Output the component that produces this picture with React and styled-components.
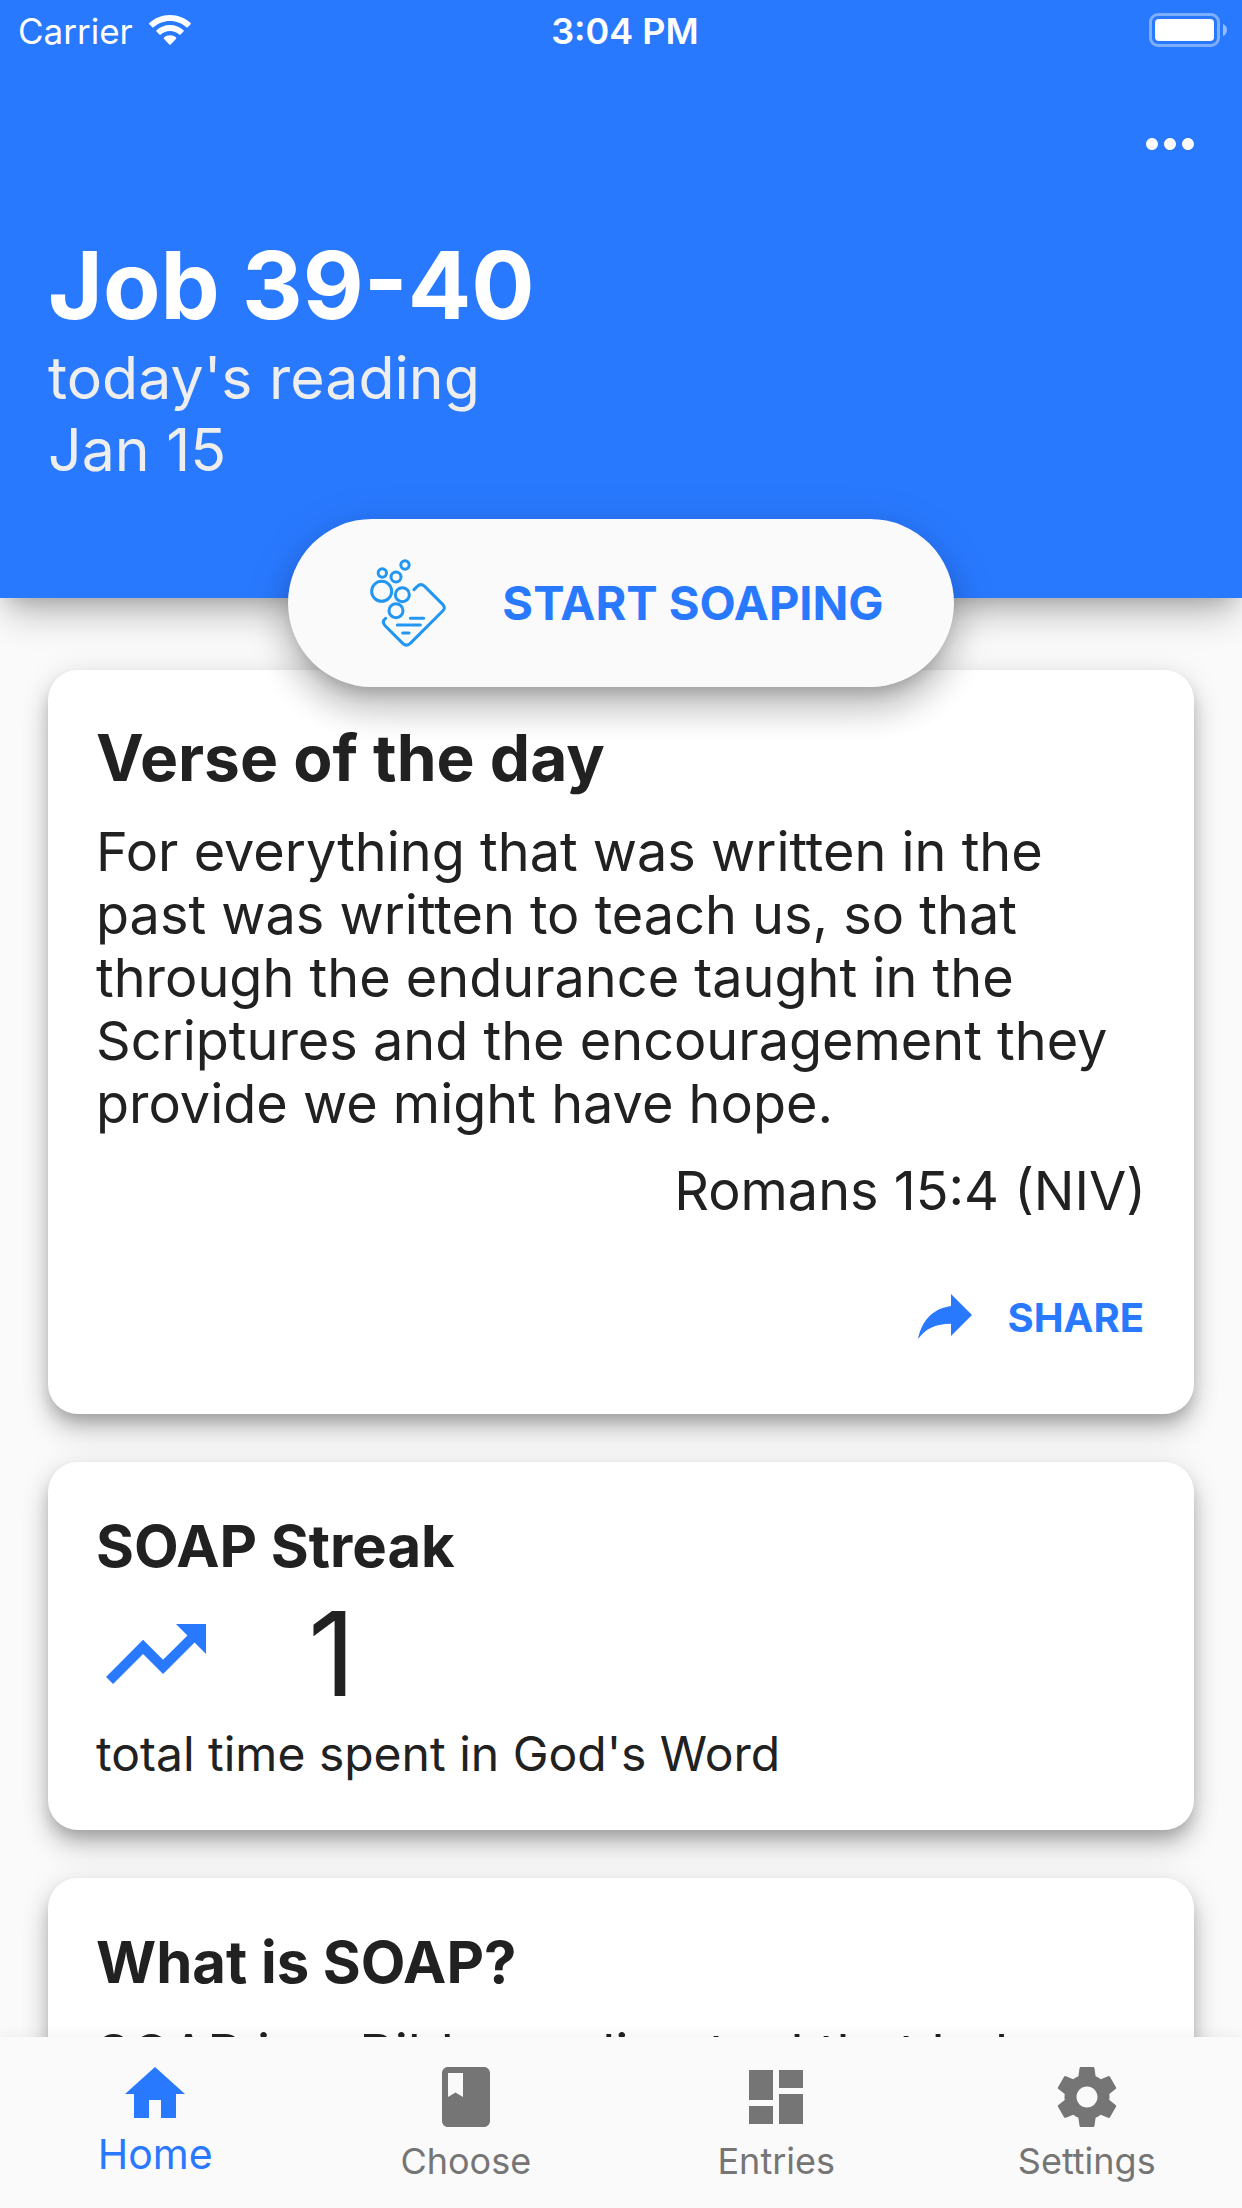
import React from "react";
import styled, { createGlobalStyle } from "styled-components";
import { MdMoreHoriz, MdTrendingUp, MdHome, MdBook, MdDashboard } from "react-icons/md";

const blue = "#2979ff";
const ink = "#212121";
const surface = "#fafafa";
const raised = "0 15px 15px -9px rgba(0, 0, 0, 0.2), 0 24px 30px 3px rgba(0, 0, 0, 0.14), 0 9px 42px 6px rgba(0, 0, 0, 0.12)";

const GlobalStyle = createGlobalStyle`
  *, *::before, *::after { box-sizing: border-box; }
  body { margin: 0; background: ${surface}; font-family: Inter, Roboto, "Liberation Sans", sans-serif; color: ${ink}; }
  h1, h2, p { margin: 0; }
  button { font: inherit; border: 0; cursor: pointer; }
  svg { display: block; flex: none; }
`;

const Screen = styled.div`
  display: flex;
  flex-direction: column;
  height: 100vh;
  overflow: hidden;
`;

const Scroller = styled.div`
  flex: 1;
  min-height: 0;
  overflow: hidden;
`;

const Header = styled.header`
  background: ${blue};
  color: #fff;
  padding-bottom: 112px;
  box-shadow: 0 12px 18px -9px rgba(0, 0, 0, 0.16), 0 24px 36px -9px rgba(0, 0, 0, 0.2), 0 9px 42px 0 rgba(0, 0, 0, 0.08);
`;

const StatusBar = styled.div`
  display: grid;
  grid-template-columns: 1fr auto 1fr;
  align-items: center;
  height: 60px;
  padding: 0 14px 0 18px;
  font-size: 35px;
  line-height: 40px;
`;

const StatusSide = styled.div`
  display: flex;
  align-items: center;
  justify-content: ${(p) => (p.$end ? "flex-end" : "flex-start")};
  gap: 16px;
`;

const StatusText = styled.span`
  padding-top: 2px;
  padding-left: ${(p) => (p.$strong ? 4 : 0)}px;
  font-size: ${(p) => (p.$strong ? 36 : 35)}px;
  font-weight: ${(p) => (p.$strong ? 600 : 400)};
`;

const Toolbar = styled.div`
  display: flex;
  justify-content: flex-end;
  padding: 48px 36px;
`;

const IconButton = styled.button`
  padding: 0;
  background: none;
  color: ${surface};
`;

const Reading = styled.div`
  padding: 0 48px;
`;

const ReadingTitle = styled.h1`
  font-size: 94px;
  line-height: 114px;
  font-weight: 700;
`;

const ReadingMeta = styled.p`
  font-size: 59px;
  line-height: 72px;
  color: #eeeeee;
`;

const ActionRow = styled.div`
  display: flex;
  justify-content: center;
  position: relative;
  z-index: 1;
  margin-top: -79px;
`;

const PillButton = styled.button`
  display: flex;
  align-items: center;
  gap: 48px;
  height: 168px;
  padding: 0 70px 0 76px;
  border-radius: 84px;
  background: ${surface};
  color: ${blue};
  font-size: 47px;
  line-height: 56px;
  font-weight: 700;
  box-shadow: ${raised};
`;

const Cards = styled.main`
  display: flex;
  flex-direction: column;
  gap: 48px;
  margin-top: -17px;
  padding: 0 48px 48px;
`;

const Card = styled.section`
  padding: 48px;
  border-radius: 30px;
  background: #fff;
  box-shadow: 0 9px 15px -3px rgba(0, 0, 0, 0.2), 0 18px 27px 0 rgba(0, 0, 0, 0.16), 0 3px 30px 0 rgba(0, 0, 0, 0.1);
`;

const CardTitle = styled.h2`
  font-size: ${(p) => (p.$large ? 64 : 58)}px;
  line-height: ${(p) => (p.$large ? 80 : 72)}px;
  font-weight: 700;
`;

const Passage = styled.p`
  margin-top: 24px;
  font-size: 54px;
  line-height: 63px;

  ${CardTitle} + & {
    margin-top: ${(p) => (p.$tight ? 22 : 24)}px;
  }
`;

const Citation = styled(Passage)`
  text-align: right;
`;

const CardActions = styled.div`
  display: flex;
  justify-content: flex-end;
  margin-top: 48px;
`;

const TextButton = styled.button`
  display: flex;
  align-items: center;
  gap: 26px;
  height: 96px;
  padding: 0 2px;
  background: none;
  color: ${blue};
  font-size: 40px;
  line-height: 48px;
  font-weight: 700;
`;

const Streak = styled.div`
  display: flex;
  align-items: center;
  gap: 92px;
  height: 120px;
  margin-top: 12px;
  color: ${blue};
`;

const StreakCount = styled.span`
  color: ${ink};
  font-size: 117px;
  line-height: 120px;
`;

const Caption = styled.p`
  margin-top: 12px;
  font-size: 48px;
  line-height: 56px;
`;

const TabBar = styled.nav`
  display: grid;
  grid-template-columns: repeat(4, 1fr);
  height: 171px;
  background: ${surface};
  position: relative;
  z-index: 2;
  box-shadow: 0 -3px 12px rgba(0, 0, 0, 0.05);
`;

const Tab = styled.a`
  display: flex;
  flex-direction: column;
  align-items: center;
  padding-top: ${(p) => (p.$active ? 21 : 24)}px;
  color: ${(p) => (p.$active ? blue : "#757575")};
  font-size: ${(p) => (p.$active ? 41 : 36)}px;
  line-height: 48px;
  gap: ${(p) => (p.$active ? 0 : 4)}px;
  text-decoration: none;
`;

const WifiIcon = () => (
  <svg width="42" height="30" viewBox="0 0 42 30" fill="#fff" aria-hidden="true">
    <path d="M21 0C29 0 36.300 3 41.600 8.100a.8.8 0 0 1 0 1.200L38.700 12.300a.9.9 0 0 1-1.200 0C33.200 8.200 27.300 5.900 21 5.900S8.800 8.200 4.500 12.300a.9.9 0 0 1-1.200 0L.4 9.300a.8.8 0 0 1 0-1.200C5.700 3 13 0 21 0Z" />
    <path d="M21 10c5.200 0 9.900 2 13.500 5.200.4.400.4.900 0 1.300l-3 3.100c-.4.400-.9.400-1.300 0C27.700 17.300 24.500 16 21 16s-6.700 1.300-9.200 3.600c-.4.400-.9.400-1.300 0l-3-3.100c-.4-.4-.4-.9 0-1.300C11.100 12 15.800 10 21 10Z" />
    <path d="M21 20.300c2.300 0 4.400.8 6 2.200.4.400.4.900.1 1.300L21.700 29.500c-.4.400-1 .4-1.400 0L14.900 23.800c-.3-.4-.3-.9.100-1.300 1.600-1.400 3.700-2.200 6-2.200Z" />
  </svg>
);

const BatteryIcon = () => (
  <svg width="79" height="34" viewBox="0 0 79 34" aria-hidden="true">
    <rect x="1.500" y="1.500" width="68" height="31" rx="7.500" fill="none" stroke="#fff" strokeOpacity="0.4" strokeWidth="3" />
    <rect x="6" y="6" width="59" height="22" rx="4" fill="#fff" />
    <path d="M74 11c2.700 1 4 3.400 4 6s-1.300 5-4 6Z" fill="#fff" fillOpacity="0.5" />
  </svg>
);

const SoapIcon = () => (
  <svg width="90" height="90" viewBox="72 84 270 270" fill="none" stroke="#2196f3" strokeWidth="9" strokeLinecap="round" strokeLinejoin="round" aria-hidden="true">
    <circle cx="125" cy="184" r="30" />
    <circle cx="187" cy="194" r="21" />
    <circle cx="168" cy="242" r="21" />
    <circle cx="168" cy="141" r="15" />
    <circle cx="127" cy="129" r="12.500" />
    <circle cx="195" cy="105" r="12.500" />
    <path d="M222 179L232 169Q243 159 254 169L308 223Q318 233 308 243L210 341Q199 350 189 341L136 288Q126 278 132 270L137 265" />
    <path d="M211 265H251M172 285H241M188 309H207" />
  </svg>
);

const ShareIcon = () => (
  <svg width="72" height="72" viewBox="0 0 24 24" fill="currentColor" aria-hidden="true">
    <path d="M21 11L14 4V8C7 9 4 14 3 19C5.500 15.500 9 13.900 14 13.900V18L21 11Z" />
  </svg>
);

const SettingsIcon = ({ size }) => (
  <svg width={size} height={size} viewBox="0 0 24 24" fill="currentColor" aria-hidden="true">
    <path d="M19.430 12.980c.04-.32.07-.64.07-.98s-.03-.66-.07-.98l2.110-1.650c.19-.15.24-.42.12-.64l-2-3.460c-.12-.22-.39-.3-.61-.22l-2.490 1c-.52-.4-1.080-.73-1.690-.98l-.38-2.650C14.460 2.180 14.250 2 14 2h-4c-.25 0-.46.18-.49.42l-.38 2.650c-.61.25-1.170.59-1.690.98l-2.490-1c-.23-.09-.49 0-.61.22l-2 3.460c-.13.22-.07.49.12.64l2.110 1.650c-.04.32-.07.65-.07.98s.03.66.07.98l-2.110 1.650c-.19.15-.24.42-.12.64l2 3.460c.12.22.39.3.61.22l2.490-1c.52.4 1.080.73 1.690.98l.38 2.650c.03.24.24.42.49.42h4c.25 0 .46-.18.49-.42l.38-2.650c.61-.25 1.170-.59 1.690-.98l2.490 1c.23.09.49 0 .61-.22l2-3.460c.12-.22.07-.49-.12-.64l-2.110-1.650zM12 15.500c-1.930 0-3.500-1.570-3.500-3.500s1.570-3.500 3.500-3.500 3.500 1.570 3.500 3.500-1.570 3.500-3.500 3.500z" />
  </svg>
);

const tabs = [
  { label: "Home", Icon: MdHome, active: true },
  { label: "Choose", Icon: MdBook },
  { label: "Entries", Icon: MdDashboard },
  { label: "Settings", Icon: SettingsIcon },
];

export default function App() {
  return (
    <Screen>
      <GlobalStyle />
      <Scroller>
        <Header>
          <StatusBar>
            <StatusSide>
              <StatusText>Carrier</StatusText>
              <WifiIcon />
            </StatusSide>
            <StatusText $strong>3:04 PM</StatusText>
            <StatusSide $end>
              <BatteryIcon />
            </StatusSide>
          </StatusBar>
          <Toolbar>
            <IconButton aria-label="More options">
              <MdMoreHoriz size={72} />
            </IconButton>
          </Toolbar>
          <Reading>
            <ReadingTitle>Job 39-40</ReadingTitle>
            <ReadingMeta>today's reading</ReadingMeta>
            <ReadingMeta>Jan 15</ReadingMeta>
          </Reading>
        </Header>
        <ActionRow>
          <PillButton>
            <SoapIcon />
            START SOAPING
          </PillButton>
        </ActionRow>
        <Cards>
          <Card>
            <CardTitle $large>Verse of the day</CardTitle>
            <Passage $tight>
              For everything that was written in the past was written to teach us, so that through the
              endurance taught in the Scriptures and the encouragement they provide we might have hope.
            </Passage>
            <Citation>Romans 15:4 (NIV)</Citation>
            <CardActions>
              <TextButton>
                <ShareIcon />
                SHARE
              </TextButton>
            </CardActions>
          </Card>
          <Card>
            <CardTitle>SOAP Streak</CardTitle>
            <Streak>
              <MdTrendingUp size={120} />
              <StreakCount>1</StreakCount>
            </Streak>
            <Caption>total time spent in God's Word</Caption>
          </Card>
          <Card>
            <CardTitle>What is SOAP?</CardTitle>
            <Passage>SOAP is a Bible reading tool that helps</Passage>
          </Card>
        </Cards>
      </Scroller>
      <TabBar>
        {tabs.map(({ label, Icon, active }) => (
          <Tab key={label} href={"#" + label.toLowerCase()} $active={active} aria-current={active ? "page" : undefined}>
            <Icon size={72} />
            {label}
          </Tab>
        ))}
      </TabBar>
    </Screen>
  );
}
